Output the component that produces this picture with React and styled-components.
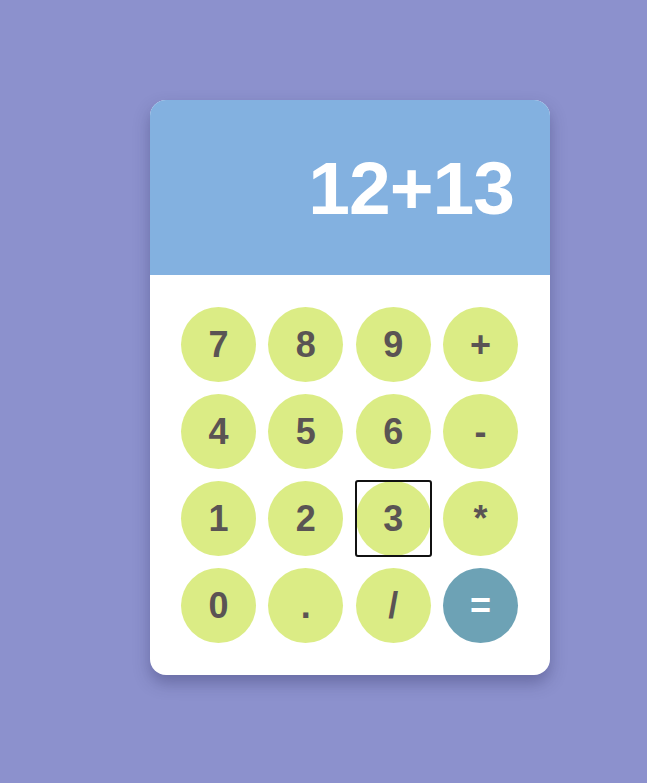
import React, { useState } from "react";
import styled, { createGlobalStyle } from "styled-components";

const GlobalStyle = createGlobalStyle`
  html, body {
    margin: 0;
    padding: 0;
    background: #8c91cd;
    font-family: "Liberation Sans", Arial, sans-serif;
  }
`;

const Page = styled.div`
  min-height: 783px;
  padding: 100px 0 0 150px;
  box-sizing: border-box;
`;

const Calculator = styled.div`
  width: 400px;
  background: #fff;
  border-radius: 16px;
  overflow: hidden;
  box-shadow: 0 8px 16px rgba(40, 40, 90, 0.35);
`;

const Display = styled.div`
  height: 175px;
  background: #83b1e0;
  display: flex;
  align-items: center;
  justify-content: flex-end;
  padding: 0 36px 0 20px;
  box-sizing: border-box;
  color: #fff;
  font-size: 75px;
  font-weight: 700;
  letter-spacing: -1px;
`;

const Keypad = styled.div`
  display: grid;
  grid-template-columns: repeat(4, 75px);
  justify-content: space-between;
  row-gap: 12px;
  padding: 32px 32px 32px 31px;
`;

const Key = styled.button`
  position: relative;
  width: 75px;
  height: 75px;
  border: none;
  border-radius: 50%;
  background: ${(p) => (p.$accent ? "#6da2b5" : "#dbec85")};
  color: ${(p) => (p.$accent ? "#fff" : "#5a5454")};
  font-family: "Liberation Sans", Arial, sans-serif;
  font-size: 36px;
  font-weight: 700;
  padding: 0;
  cursor: pointer;
  outline: none;

  &::after {
    content: "";
    display: ${(p) => (p.$focused ? "block" : "none")};
    position: absolute;
    inset: -1px;
    border: 2px solid #111;
    border-radius: 3px;
  }
`;

const KEYS = ["7", "8", "9", "+", "4", "5", "6", "-", "1", "2", "3", "*", "0", ".", "/", "="];

export default function App() {
  const [expr, setExpr] = useState("12+13");
  const [focused, setFocused] = useState("3");

  const press = (k) => {
    setFocused(k);
    if (k === "=") {
      try {
        // eslint-disable-next-line no-new-func
        setExpr(String(Function(`return (${expr})`)()));
      } catch (e) {
        setExpr("Error");
      }
    } else {
      setExpr((v) => v + k);
    }
  };

  return (
    <>
      <GlobalStyle />
      <Page>
        <Calculator>
          <Display>{expr}</Display>
          <Keypad>
            {KEYS.map((k) => (
              <Key
                key={k}
                $accent={k === "="}
                $focused={focused === k}
                onClick={() => press(k)}
              >
                {k}
              </Key>
            ))}
          </Keypad>
        </Calculator>
      </Page>
    </>
  );
}
